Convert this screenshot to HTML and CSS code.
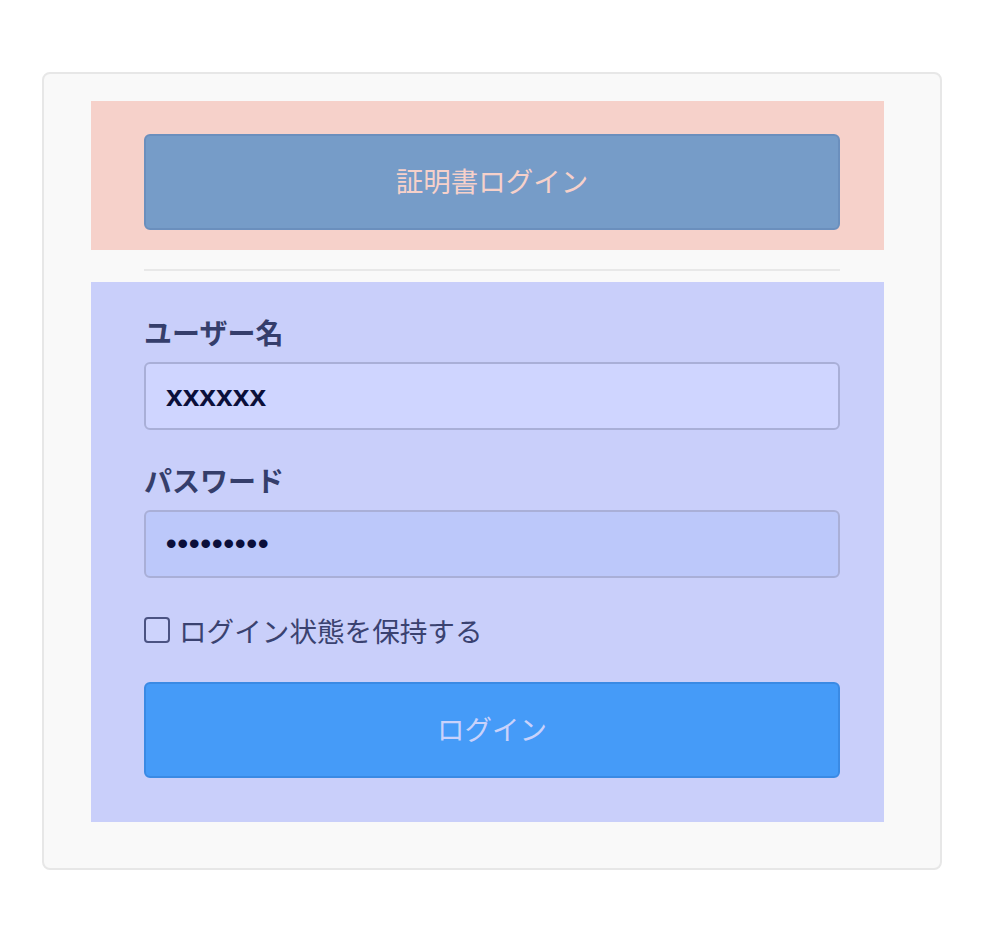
FILE: index.html
```html
<!DOCTYPE html>
<html lang="ja">
<head>
<meta charset="utf-8">
<title>ログイン</title>
<link rel="stylesheet" href="styles.css">
</head>
<body>
<div class="card">
  <div class="cert-section">
    <button class="btn btn-cert" type="button">証明書ログイン</button>
  </div>
  <hr class="divider">
  <form class="login-section">
    <label class="field-label" for="user">ユーザー名</label>
    <input class="field-input input-user" id="user" type="text" value="xxxxxx">
    <label class="field-label" for="pass">パスワード</label>
    <input class="field-input input-pass" id="pass" type="password" value="xxxxxxxxx">
    <label class="remember">
      <span class="check"></span>
      <span class="remember-text">ログイン状態を保持する</span>
    </label>
    <button class="btn btn-login" type="button">ログイン</button>
  </form>
</div>
</body>
</html>
```

FILE: styles.css
```css
* { box-sizing: border-box; }
html, body { margin: 0; padding: 0; background: #ffffff; }
body {
  font-family: "Noto Sans CJK JP", "Noto Sans", sans-serif;
  padding: 72px 0 0 42px;
}
.card {
  width: 900px;
  height: 798px;
  border: 2px solid #e7e7e7;
  border-radius: 8px;
  background: #f9f9f9;
  padding: 27px 56px 0 47px;
}
.cert-section {
  background: #f6d1ca;
  padding: 33px 44px 20px 53px;
}
.btn {
  display: block;
  width: 696px;
  height: 96px;
  border-radius: 6px;
  padding: 0 0 4px;
  font-family: "Noto Sans CJK JP", sans-serif;
  font-size: 27.5px;
  font-weight: 400;
  cursor: pointer;
}
.btn-cert {
  background: #769cc8;
  border: 2px solid #6b8fbd;
  color: #f6d1ca;
}
.divider {
  margin: 19px 44px 11px 53px;
  border: 0;
  height: 2px;
  background: #e8e8e8;
}
.login-section {
  background: #c9cffa;
  padding: 30px 44px 44px 53px;
  display: flex;
  flex-direction: column;
  margin: 0;
}
.field-label {
  font-size: 28px;
  font-weight: 700;
  color: #353e6b;
  line-height: 40px;
  margin-bottom: 10px;
}
.field-input {
  width: 696px;
  height: 68px;
  border: 2px solid #a9afd7;
  border-radius: 6px;
  padding: 0 20px;
  font-family: "Liberation Sans", Arial, sans-serif;
  font-size: 30px;
  font-weight: 700;
  color: #0b0f3a;
  outline: none;
}
.input-user { background: #cfd5ff; margin-bottom: 30px; }
.input-pass { background: #bcc8fa; letter-spacing: 1px; }
.remember {
  display: flex;
  align-items: center;
  gap: 9px;
  margin-top: 36px;
  height: 32px;
}
.check {
  width: 26px;
  height: 26px;
  border: 2px solid #4b5382;
  border-radius: 4px;
  background: #cdd3fc;
}
.remember-text {
  font-size: 27.6px;
  color: #3a4270;
  line-height: 32px;
}
.btn-login {
  margin-top: 36px;
  background: #459bf8;
  border: 2px solid #3a8ae4;
  color: #c9d2fb;
}
```
